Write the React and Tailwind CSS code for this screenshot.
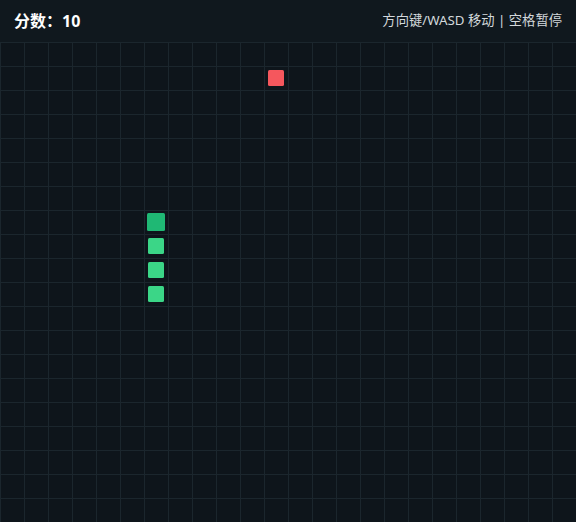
import React from "react";

const COLS = 24;
const ROWS = 20;

const snake = [
  [6, 7],
  [6, 8],
  [6, 9],
  [6, 10],
];
const food = [11, 1];

const Cell = ({ x, y }) => {
  const segIndex = snake.findIndex(([sx, sy]) => sx === x && sy === y);
  const isFood = food[0] === x && food[1] === y;

  return (
    <div className="flex h-6 w-6 items-center justify-center">
      {segIndex === 0 && (
        <div className="h-[18px] w-[18px] rounded-[1.5px] bg-[#1fb874]" />
      )}
      {segIndex > 0 && (
        <div className="h-4 w-4 rounded-[1.5px] bg-[#3bd687]" />
      )}
      {isFood && <div className="h-4 w-4 rounded-[1.5px] bg-[#f5575d]" />}
    </div>
  );
};

const App = () => {
  const score = 10;
  const cells = [];
  for (let y = 0; y < ROWS; y++) {
    for (let x = 0; x < COLS; x++) {
      cells.push(<Cell key={`${x}-${y}`} x={x} y={y} />);
    }
  }

  return (
    <div
      className="flex h-[522px] w-[576px] flex-col bg-[#0e151b] text-white"
      style={{ fontFamily: '"Noto Sans", "Noto Sans CJK SC", sans-serif' }}
    >
      <header className="flex h-[42px] items-center justify-between bg-[#10181e] px-[14px]">
        <span className="text-base font-bold">分数：{score}</span>
        <span className="text-[13.3px] text-[#d3d8dc]">方向键/WASD 移动 | 空格暂停</span>
      </header>
      {/* board: 24px cells, grid lines drawn as a repeating background */}
      <div className="grid grid-cols-[repeat(24,24px)] bg-[linear-gradient(to_right,#1b262d_1px,transparent_1px),linear-gradient(to_bottom,#1b262d_1px,transparent_1px)] bg-[size:24px_24px]">
        {cells}
      </div>
    </div>
  );
};

export default App;
